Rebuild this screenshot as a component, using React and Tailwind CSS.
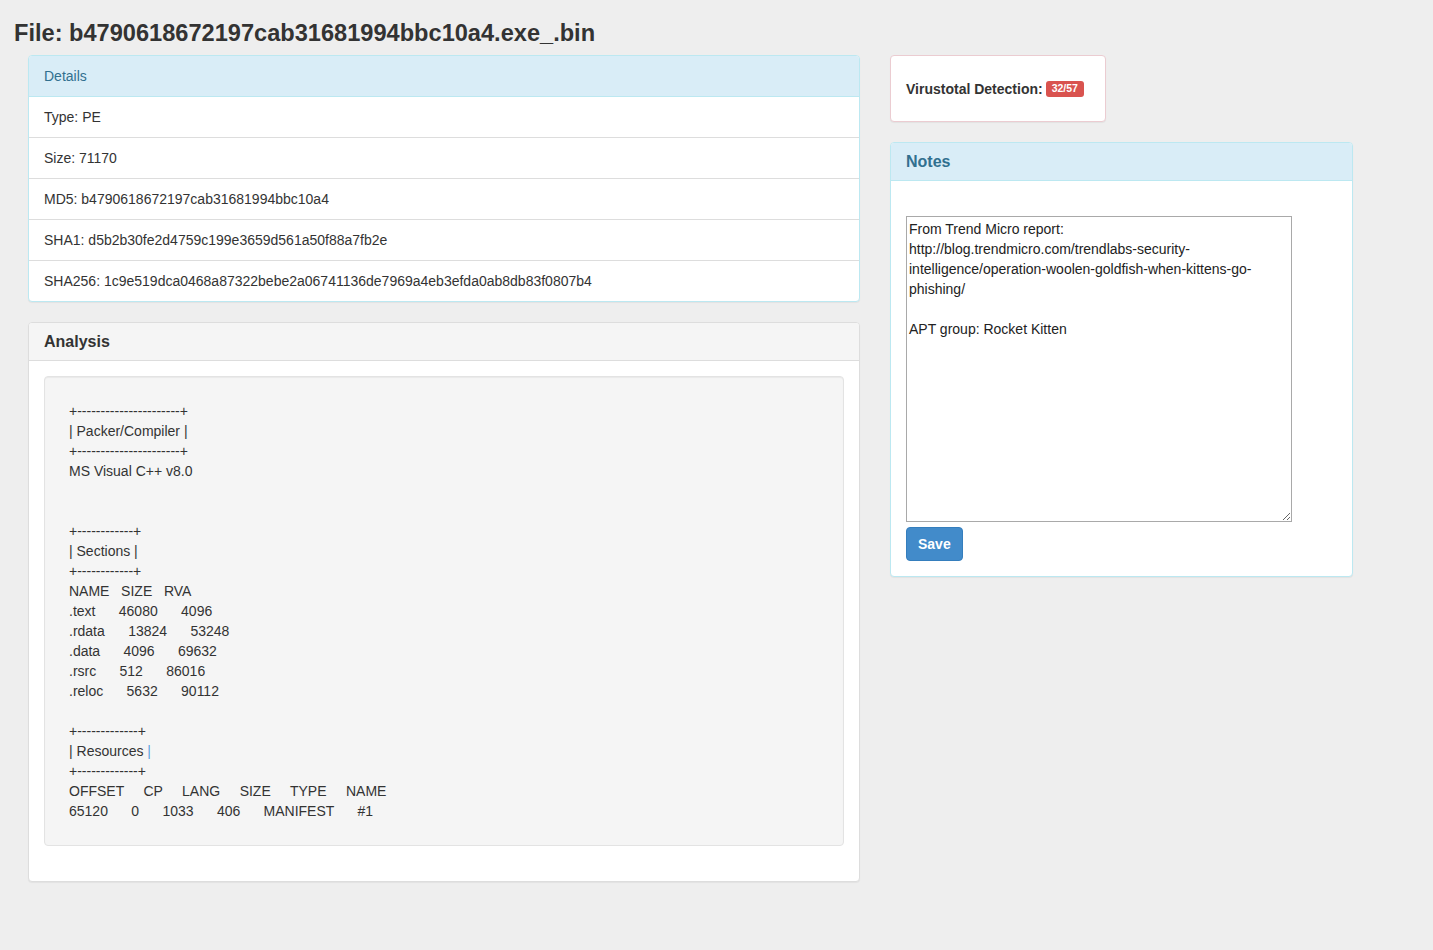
import React from 'react';

const details = [
  'Type: PE',
  'Size: 71170',
  'MD5: b4790618672197cab31681994bbc10a4',
  'SHA1: d5b2b30fe2d4759c199e3659d561a50f88a7fb2e',
  'SHA256: 1c9e519dca0468a87322bebe2a06741136de7969a4eb3efda0ab8db83f0807b4',
];

const analysis = [
  '+----------------------+',
  '| Packer/Compiler |',
  '+----------------------+',
  'MS Visual C++ v8.0',
  '',
  '',
  '+------------+',
  '| Sections |',
  '+------------+',
  'NAME   SIZE   RVA',
  '.text      46080      4096',
  '.rdata      13824      53248',
  '.data      4096      69632',
  '.rsrc      512      86016',
  '.reloc      5632      90112',
  '',
  '+-------------+',
  'RESOURCES',
  '+-------------+',
  'OFFSET     CP     LANG     SIZE     TYPE     NAME',
  '65120      0      1033      406      MANIFEST      #1',
];

const notes =
  'From Trend Micro report:\nhttp://blog.trendmicro.com/trendlabs-security-intelligence/operation-woolen-goldfish-when-kittens-go-phishing/\n\nAPT group: Rocket Kitten';

export default function App() {
  const [text, setText] = React.useState(notes);

  return (
    <div className="min-h-screen bg-[#eeeeee] px-[14px] text-[14px] leading-[20px] text-[#333333] font-['Liberation_Sans',Arial,sans-serif]">
      <h1 className="pt-[20px] pb-[9px] text-[23.6px] leading-[26px] font-bold">
        File: b4790618672197cab31681994bbc10a4.exe_.bin
      </h1>

      <div className="flex items-start">
        {/* left column */}
        <div className="ml-[14px] w-[832px]">
          <div className="rounded-[4px] border border-[#bce8f1] bg-white shadow-[0_1px_1px_rgba(0,0,0,0.05)]">
            <div className="rounded-t-[3px] border-b border-[#bce8f1] bg-[#d9edf7] px-[15px] py-[10px] text-[#31708f]">
              Details
            </div>
            {details.map((d, i) => (
              <div
                key={d}
                className={`px-[15px] py-[10px] ${i < details.length - 1 ? 'border-b border-[#dddddd]' : ''}`}
              >
                {d}
              </div>
            ))}
          </div>

          <div className="mt-[20px] rounded-[4px] border border-[#dddddd] bg-white shadow-[0_1px_1px_rgba(0,0,0,0.05)]">
            <div className="rounded-t-[3px] border-b border-[#dddddd] bg-[#f5f5f5] px-[15px] py-[10px] text-[16px] leading-[17px] font-semibold">
              Analysis
            </div>
            <div className="p-[15px]">
              <div className="mb-[20px] rounded-[4px] border border-[#e3e3e3] bg-[#f5f5f5] px-[24px] py-[24px] shadow-[inset_0_1px_1px_rgba(0,0,0,0.05)]">
                {analysis.map((line, i) =>
                  line === 'RESOURCES' ? (
                    <div key={i} className="whitespace-pre h-[20px]">
                      | Resources <span className="text-[#5aa0e0]">|</span>
                    </div>
                  ) : (
                    <div key={i} className="whitespace-pre h-[20px]">
                      {line}
                    </div>
                  )
                )}
              </div>
            </div>
          </div>
        </div>

        {/* right column */}
        <div className="ml-[30px] w-[463px]">
          <div className="flex h-[67px] w-[216px] items-center rounded-[4px] border border-[#ebccd1] bg-white px-[15px] shadow-[0_1px_1px_rgba(0,0,0,0.05)]">
            <span className="font-bold">Virustotal Detection:</span>
            <span className="ml-[3px] rounded-[3px] bg-[#d9534f] px-[6px] pt-[2px] pb-[3px] text-[10.5px] leading-[11px] font-bold text-white">
              32/57
            </span>
          </div>

          <div className="mt-[20px] rounded-[4px] border border-[#bce8f1] bg-white shadow-[0_1px_1px_rgba(0,0,0,0.05)]">
            <div className="rounded-t-[3px] border-b border-[#bce8f1] bg-[#d9edf7] px-[15px] py-[10px] text-[16px] leading-[17px] font-semibold text-[#31708f]">
              Notes
            </div>
            <div className="px-[15px] pt-[35px] pb-[15px]">
              <textarea
                className="block h-[306px] w-[386px] border border-[#a9a9a9] bg-white p-[2px] text-[14px] leading-[20px] text-[#222222] outline-none font-['Liberation_Sans',Arial,sans-serif]"
                value={text}
                onChange={(e) => setText(e.target.value)}
              />
              <button className="mt-[5px] h-[34px] rounded-[4px] border border-[#357ebd] bg-[#428bca] px-[11px] font-bold text-white">
                Save
              </button>
            </div>
          </div>
        </div>
      </div>
    </div>
  );
}
